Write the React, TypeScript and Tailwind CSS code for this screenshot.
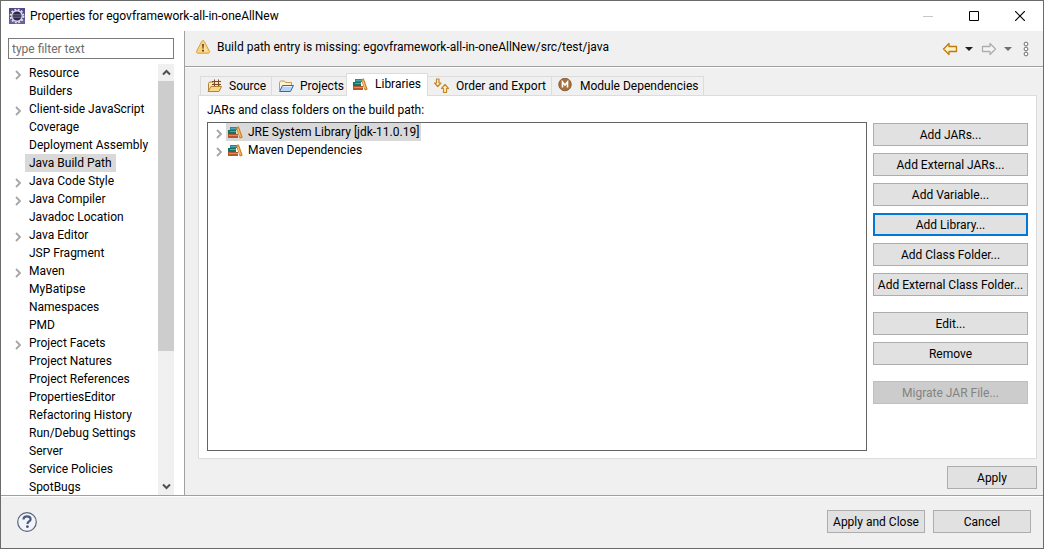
import { useState } from "react";
import type { ReactNode } from "react";

type TreeNode = { label: string; expandable?: boolean };

const pages: TreeNode[] = [
  { label: "Resource", expandable: true },
  { label: "Builders" },
  { label: "Client-side JavaScript", expandable: true },
  { label: "Coverage" },
  { label: "Deployment Assembly" },
  { label: "Java Build Path" },
  { label: "Java Code Style", expandable: true },
  { label: "Java Compiler", expandable: true },
  { label: "Javadoc Location" },
  { label: "Java Editor", expandable: true },
  { label: "JSP Fragment" },
  { label: "Maven", expandable: true },
  { label: "MyBatipse" },
  { label: "Namespaces" },
  { label: "PMD" },
  { label: "Project Facets", expandable: true },
  { label: "Project Natures" },
  { label: "Project References" },
  { label: "PropertiesEditor" },
  { label: "Refactoring History" },
  { label: "Run/Debug Settings" },
  { label: "Server" },
  { label: "Service Policies" },
  { label: "SpotBugs" },
];

function AppLogo() {
  return (
    <svg width="16" height="16" viewBox="0 0 16 16" className="shrink-0" aria-hidden="true">
      <rect width="16" height="16" fill="#55478c" />
      <rect y="11" width="16" height="5" fill="#6d5aa0" />
      <circle cx="8" cy="8" r="6.4" fill="none" stroke="#e3e1ea" strokeWidth="2" strokeDasharray="1.8 1.55" />
      <circle cx="8" cy="8" r="5.2" fill="#2a2547" stroke="#d8d6df" strokeWidth="1.4" />
      <path d="M4 6.5h8M3.6 8h8.8M4 9.5h8" stroke="#77759b" strokeWidth="0.7" />
    </svg>
  );
}

function WarningIcon() {
  return (
    <svg width="16" height="16" viewBox="0 0 16 16" className="shrink-0" aria-hidden="true">
      <path
        d="M8 1.5c.6 0 1 .3 1.3.9l5 9.7c.6 1.2.1 2.1-1.2 2.1H2.9c-1.3 0-1.8-.9-1.2-2.1l5-9.7C7 1.8 7.4 1.5 8 1.5z"
        fill="#fbd27c"
        stroke="#d9a04a"
      />
      <path d="M8 3l4.8 9.5H9z" fill="#fde9b5" opacity="0.6" />
      <path d="M7.1 5h1.8L8.5 9.8h-1z" fill="#5f3f16" />
      <rect x="7" y="10.7" width="2" height="1.8" rx="0.6" fill="#5f3f16" />
    </svg>
  );
}

function Chevron() {
  return (
    <svg width="7" height="10" viewBox="0 0 7 10" className="shrink-0" aria-hidden="true">
      <path d="M1 1l4 4-4 4" fill="none" stroke="#a6a6a6" strokeWidth="1.8" />
    </svg>
  );
}

function SourceIcon() {
  return (
    <svg width="16" height="16" viewBox="0 0 16 16" className="shrink-0" aria-hidden="true">
      <path d="M1.5 12.5V5.5l1-1.5h3l1 1.5h6v7z" fill="#fbe7b4" stroke="#b5823a" />
      <path d="M6.5 2.5h7v5h-7z" fill="#f6e3cf" />
      <path d="M5 3.5h9M5 6.5h9M7.5 1.5v7M11.5 1.5v7" stroke="#7b4a22" />
      <path d="M1 13.5l3-5h10.500l-2.500 5z" fill="#fbd88b" stroke="#b5823a" strokeLinejoin="round" />
    </svg>
  );
}

function ProjectsIcon() {
  return (
    <svg width="16" height="16" viewBox="0 0 16 16" className="shrink-0" aria-hidden="true">
      <path d="M1.5 12V4.5l1-1.5h4l1 1.5h6V8" fill="#fff3cf" stroke="#c79a4b" />
      <path d="M1.5 13.5l3-6h11l-3 6z" fill="#b5d5f8" stroke="#3567b5" strokeLinejoin="round" />
      <path d="M5.500 8.500h8" stroke="#e3f1ff" />
    </svg>
  );
}

function LibraryIcon() {
  return (
    <svg width="16" height="16" viewBox="0 0 16 16" className="shrink-0" aria-hidden="true">
      <rect x="2" y="3" width="7" height="3" fill="#2c83a5" />
      <rect x="3" y="4" width="6" height="1" fill="#4aa9bd" />
      <rect x="0" y="6" width="8" height="4" fill="#17735f" />
      <rect x="2" y="7" width="6" height="1" fill="#4fae92" />
      <rect x="0" y="10" width="10" height="4" fill="#b9562c" />
      <rect x="1" y="11" width="9" height="1" fill="#e08d52" />
      <path d="M8.5 3.5l2-.7 3.700 10.500-2.200.7z" fill="#f0a43c" stroke="#b96f20" strokeWidth="0.8" />
      <path d="M9.800 5l2.400 7.500" stroke="#ffd88b" strokeWidth="0.7" />
    </svg>
  );
}

function OrderIcon() {
  return (
    <svg width="16" height="16" viewBox="0 0 16 16" className="shrink-0" aria-hidden="true">
      <path d="M2.500 1h2.500v4h2L3.750 8.500.5 5h2z" fill="#fff0c4" stroke="#c4882b" strokeWidth="1.200" strokeLinejoin="round" />
      <path d="M9.500 14.500h3v-4h2L11 6.500 7.500 10.500h2z" fill="#fff0c4" stroke="#c4882b" strokeWidth="1.200" strokeLinejoin="round" />
    </svg>
  );
}

function ModuleIcon() {
  return (
    <svg width="16" height="16" viewBox="0 0 16 16" className="shrink-0" aria-hidden="true">
      <circle cx="7" cy="6.500" r="6.300" fill="#a5723f" stroke="#80532a" strokeWidth="0.8" />
      <path d="M4.500 9.500V4L7 7l2.500-3v5.500" fill="none" stroke="#fff" strokeWidth="1.600" />
    </svg>
  );
}

function ArrowIcon({ forward = false }: { forward?: boolean }) {
  return (
    <svg width="16" height="14" viewBox="0 0 16 14" className="shrink-0" aria-hidden="true">
      {forward ? (
        <path d="M14.500 7L9 1.500v3H1.500v5H9v3z" fill="#f4f4f4" stroke="#adadad" strokeWidth="1.300" strokeLinejoin="round" />
      ) : (
        <path d="M1.500 7L7 1.500v3h7.500v5H7v3z" fill="#fff1c2" stroke="#be7a10" strokeWidth="1.300" strokeLinejoin="round" />
      )}
    </svg>
  );
}

function DropIcon({ className }: { className: string }) {
  return (
    <svg width="8" height="4" viewBox="0 0 8 4" className={className} aria-hidden="true">
      <path d="M0 0h8L4 4z" fill="currentColor" />
    </svg>
  );
}

function MenuIcon() {
  return (
    <svg width="6" height="16" viewBox="0 0 6 16" fill="#fff" stroke="#707070" aria-hidden="true">
      <circle cx="3" cy="3" r="1.9" />
      <circle cx="3" cy="8" r="1.9" />
      <circle cx="3" cy="13" r="1.9" />
    </svg>
  );
}

function ScrollArrow({ up = false }: { up?: boolean }) {
  return (
    <svg width="9" height="7" viewBox="0 0 9 7" aria-hidden="true">
      <path d={up ? "M1 5.5L4.5 2 8 5.5" : "M1 1.5L4.5 5 8 1.5"} fill="none" stroke="#505050" strokeWidth="2" />
    </svg>
  );
}

type ButtonProps = { children: ReactNode; className?: string; focused?: boolean; disabled?: boolean };

function PushButton({ children, className = "w-full", focused = false, disabled = false }: ButtonProps) {
  const look = disabled
    ? "border border-[#bfbfbf] bg-[#cccccc] text-[#838383]"
    : focused
      ? "border-2 border-[#0078d7] bg-[#e1e1e1]"
      : "border border-[#adadad] bg-[#e1e1e1]";
  return (
    <button
      type="button"
      disabled={disabled}
      className={`flex h-[23px] shrink-0 items-center justify-center whitespace-nowrap ${look} ${className}`}
    >
      {children}
    </button>
  );
}

const tabs = [
  { label: "Source", icon: <SourceIcon />, width: "w-[72px]" },
  { label: "Projects", icon: <ProjectsIcon />, width: "w-[76px]" },
  { label: "Libraries", icon: <LibraryIcon />, width: "w-[82px]" },
  { label: "Order and Export", icon: <OrderIcon />, width: "w-[125px]" },
  { label: "Module Dependencies", icon: <ModuleIcon />, width: "w-[153px]" },
];

const entries = ["JRE System Library [jdk-11.0.19]", "Maven Dependencies"];

export default function App() {
  const [page, setPage] = useState("Java Build Path");
  const [tab, setTab] = useState("Libraries");
  const [entry, setEntry] = useState(entries[0]);

  return (
    <div className="flex h-screen flex-col overflow-hidden border border-[#6b6b6b] bg-[#f0f0f0] font-[Roboto,sans-serif] text-xs leading-[18px] text-black">
      <header className="flex h-[30px] shrink-0 items-center bg-white pl-2">
        <AppLogo />
        <h1 className="ml-[5px] flex-1 whitespace-nowrap">Properties for egovframework-all-in-oneAllNew</h1>
        <button type="button" aria-label="Minimize" className="flex h-full w-[46px] items-center justify-center">
          <svg width="10" height="10" viewBox="0 0 10 10"><path d="M0 5.500h10" stroke="#c8c8c8" /></svg>
        </button>
        <button type="button" aria-label="Maximize" className="flex h-full w-[46px] items-center justify-center">
          <svg width="10" height="10" viewBox="0 0 10 10"><path d="M.5.5h9v9h-9z" fill="none" stroke="#000" /></svg>
        </button>
        <button type="button" aria-label="Close" className="flex h-full w-[46px] items-center justify-center">
          <svg width="10" height="10" viewBox="0 0 10 10"><path d="M0 0l10 10M10 0L0 10" stroke="#000" strokeWidth="1.200" /></svg>
        </button>
      </header>

      <div className="flex min-h-0 flex-1">
        <aside className="flex w-[184px] shrink-0 flex-col border-r border-[#a0a0a0] bg-white">
          <input
            type="text"
            aria-label="Filter"
            placeholder="type filter text"
            className="mt-[7px] mr-[10px] ml-[7px] h-[21px] shrink-0 border border-[#7a7a7a] bg-white px-[3px] outline-none placeholder:text-[#6d6d6d]"
          />
          <div className="mt-[5px] mr-[10px] ml-[7px] flex min-h-0 flex-1">
            <ul className="min-w-0 flex-1 overflow-hidden">
              {pages.map((node) => (
                <li key={node.label} className="flex h-[18px] items-center">
                  <span className="flex w-[17px] shrink-0 justify-center pt-1 pl-1">{node.expandable && <Chevron />}</span>
                  <button
                    type="button"
                    onClick={() => setPage(node.label)}
                    className={`flex h-[18px] items-center px-1 whitespace-nowrap ${page === node.label ? "bg-[#d9d9d9]" : ""}`}
                  >
                    {node.label}
                  </button>
                </li>
              ))}
            </ul>
            <div className="flex w-4 shrink-0 flex-col bg-[#f0f0f0]">
              <div className="flex h-[17px] shrink-0 items-center justify-center"><ScrollArrow up /></div>
              <div className="min-h-0 flex-1"><div className="h-[68%] bg-[#cdcdcd]" /></div>
              <div className="flex h-[17px] shrink-0 items-center justify-center"><ScrollArrow /></div>
            </div>
          </div>
        </aside>

        <main className="flex min-w-0 flex-1 flex-col">
          <div className="flex h-9 shrink-0 items-center border-b border-[#a0a0a0] pr-[14px] pb-1 pl-[10px]">
            <WarningIcon />
            <p className="ml-[6px] flex-1 whitespace-nowrap">
              Build path entry is missing: egovframework-all-in-oneAllNew/src/test/java
            </p>
            <div className="flex items-center pt-1">
              <button type="button" aria-label="Back"><ArrowIcon /></button>
              <button type="button" aria-label="Back history" className="ml-[7px]"><DropIcon className="text-[#202020]" /></button>
              <button type="button" aria-label="Forward" className="ml-2"><ArrowIcon forward /></button>
              <button type="button" aria-label="Forward history" className="ml-[7px]"><DropIcon className="text-[#707070]" /></button>
              <button type="button" aria-label="View menu" className="ml-[11px]"><MenuIcon /></button>
            </div>
          </div>

          <div className="flex min-h-0 flex-1 flex-col border-t border-white pt-[5px] pr-[6px] pb-[6px] pl-[13px]">
            <div role="tablist" className="flex h-[23px] shrink-0 items-end pl-[2px]">
              {tabs.map((t, i) => (
                <button
                  key={t.label}
                  type="button"
                  role="tab"
                  aria-selected={tab === t.label}
                  onClick={() => setTab(t.label)}
                  className={`flex items-center gap-[6px] border border-b-0 border-[#dcdcdc] pl-[6px] whitespace-nowrap ${t.width} ${
                    tab === t.label ? "z-10 h-[23px] bg-white pb-[2px]" : "h-5 bg-[#f0f0f0] pb-px"
                  } ${i > 0 ? "-ml-px" : ""}`}
                >
                  {t.icon}
                  {t.label}
                </button>
              ))}
            </div>

            <section className="-mt-px flex min-h-0 flex-1 flex-col border border-[#dcdcdc] bg-white px-2 pt-[5px] pb-[7px]">
              <p className="shrink-0">JARs and class folders on the build path:</p>
              <div className="mt-[3px] flex min-h-0 flex-1 gap-[6px]">
                <ul className="min-w-0 flex-1 border border-[#646464] bg-white pl-[5px]">
                  {entries.map((name) => (
                    <li key={name} className="flex h-[18px] items-center">
                      <span className="flex w-[13px] shrink-0 justify-center pt-1"><Chevron /></span>
                      <button
                        type="button"
                        onClick={() => setEntry(name)}
                        className={`flex h-[18px] items-center gap-1 px-[2px] whitespace-nowrap ${entry === name ? "bg-[#d9d9d9]" : ""}`}
                      >
                        <LibraryIcon />
                        {name}
                      </button>
                    </li>
                  ))}
                </ul>
                <div className="flex w-[155px] shrink-0 flex-col gap-[7px] pt-px">
                  <PushButton>Add JARs...</PushButton>
                  <PushButton>Add External JARs...</PushButton>
                  <PushButton>Add Variable...</PushButton>
                  <PushButton focused>Add Library...</PushButton>
                  <PushButton>Add Class Folder...</PushButton>
                  <PushButton>Add External Class Folder...</PushButton>
                  <PushButton className="mt-[9px] w-full">Edit...</PushButton>
                  <PushButton>Remove</PushButton>
                  <PushButton disabled className="mt-[9px] w-full">Migrate JAR File...</PushButton>
                </div>
              </div>
            </section>

            <div className="mt-[7px] flex shrink-0 justify-end">
              <PushButton className="w-[90px]">Apply</PushButton>
            </div>
          </div>
        </main>
      </div>

      <footer className="flex h-[53px] shrink-0 items-center border-t border-[#a0a0a0] pr-3 pb-px pl-4 shadow-[inset_0_1px_0_#ffffff]">
        <button type="button" aria-label="Help">
          <svg width="20" height="20" viewBox="0 0 20 20" aria-hidden="true">
            <circle cx="10" cy="10" r="9.3" fill="#f2f4f7" stroke="#56657f" strokeWidth="1.2" />
            <path d="M6.500 7.500C6.500 5.400 8 4.300 10 4.300s3.600 1.100 3.600 2.900c0 2.300-3.100 2.300-3.100 4.700" fill="none" stroke="#4b5a85" strokeWidth="2.2" />
            <circle cx="10.400" cy="14.700" r="1.400" fill="#4b5a85" />
          </svg>
        </button>
        <div className="flex flex-1 justify-end gap-2">
          <PushButton className="w-[98px]">Apply and Close</PushButton>
          <PushButton className="w-[98px]">Cancel</PushButton>
        </div>
      </footer>
    </div>
  );
}
